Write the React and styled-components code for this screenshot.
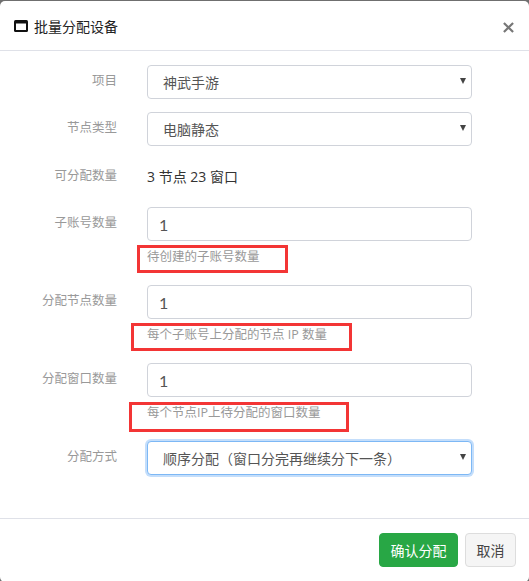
import React from 'react'
import styled, { createGlobalStyle } from 'styled-components'

const FONT = `"Open Sans", "Noto Sans CJK SC", sans-serif`

const GlobalStyle = createGlobalStyle`
    html, body {
        margin: 0;
        padding: 0;
        background: #6f6f6f;
        overflow: hidden;
    }
    * {
        box-sizing: border-box;
    }
`

const Modal = styled.div`
    position: relative;
    width: 529px;
    height: 581px;
    margin-top: 1px;
    background: #fff;
    border-radius: 5px;
    font-family: ${FONT};
    font-size: 14px;
    overflow: hidden;
`

const Header = styled.div`
    display: flex;
    align-items: center;
    justify-content: space-between;
    height: 50px;
    padding: 0 15px 0 14px;
    border-bottom: 1px solid #dfe1e8;
`

const Title = styled.div`
    display: flex;
    align-items: center;
    gap: 6px;
    color: #222;
    font-size: 14px;
`

const CloseIcon = styled.svg`
    width: 11px;
    height: 11px;
    margin-top: 4px;
    stroke: #777;
    stroke-width: 2.4;
`

const Body = styled.form`
    display: flex;
    flex-direction: column;
    height: 467px;
    padding-top: 14px;
`

const Row = styled.div`
    display: grid;
    grid-template-columns: 117px 325px;
    column-gap: 30px;
    margin-bottom: ${(p) => p.$gap}px;
`

const Label = styled.label`
    color: #999;
    font-size: 12.5px;
    line-height: 18px;
    text-align: right;
    padding-top: ${(p) => p.$top || 7}px;
`

const SelectBox = styled.div`
    position: relative;

    &::after {
        content: '';
        position: absolute;
        top: 13px;
        right: 6px;
        border-style: solid;
        border-width: 6px 3px 0;
        border-color: #444 transparent transparent;
        pointer-events: none;
    }
`

const Select = styled.select`
    display: block;
    width: 100%;
    height: 34px;
    padding: 0 15px;
    background: #fff;
    border: 1px solid ${(p) => (p.$focus ? '#7db8f5' : '#d0d3da')};
    border-radius: 4px;
    box-shadow: ${(p) => (p.$focus ? '0 0 0 2px #c4defb' : 'none')};
    color: #555;
    font-family: ${FONT};
    font-size: 14px;
    outline: none;
    appearance: none;
`

const Input = styled.input`
    display: block;
    width: 100%;
    height: 34px;
    padding: 0 11px;
    border: 1px solid #d0d3da;
    border-radius: 4px;
    color: #555;
    font-family: Lato, sans-serif;
    font-size: 16px;
    outline: none;
`

const Static = styled.div`
    color: #333;
    font-size: 14px;
    line-height: 20px;
    padding-top: 8px;
`

const Help = styled.div`
    color: #999;
    font-size: 12.5px;
    line-height: 16px;
    margin-top: 8px;
`

const Mark = styled.span`
    position: absolute;
    left: ${(p) => p.$x}px;
    top: ${(p) => p.$y}px;
    width: ${(p) => p.$w}px;
    height: ${(p) => p.$h}px;
    border: 3px solid #f33535;
`

const Footer = styled.div`
    display: flex;
    justify-content: flex-end;
    gap: 7px;
    padding: 14px 13px 0 0;
    border-top: 1px solid #dfe1e8;
`

const Button = styled.button`
    height: 34px;
    padding: 0 10.5px;
    background: ${(p) => (p.$primary ? '#28a745' : '#f5f5f5')};
    border: 1px solid ${(p) => (p.$primary ? '#28a745' : '#dddddd')};
    border-radius: 4px;
    color: ${(p) => (p.$primary ? '#fff' : '#444')};
    font-family: ${FONT};
    font-size: 14px;
`

function App() {
    return (
        <>
            <GlobalStyle />
            <Modal>
                <Header>
                    <Title>
                        <svg width="14" height="12" viewBox="0 0 14 12">
                            <rect x="0" y="0" width="14" height="12" rx="1.5" fill="#111" />
                            <rect x="2" y="3.5" width="10" height="6.5" fill="#fff" />
                        </svg>
                        批量分配设备
                    </Title>
                    <CloseIcon viewBox="0 0 12 12">
                        <path d="M1 1 L11 11 M11 1 L1 11" />
                    </CloseIcon>
                </Header>
                <Body>
                    <Row $gap={13}>
                        <Label>项目</Label>
                        <SelectBox>
                            <Select defaultValue="a">
                                <option value="a">神武手游</option>
                            </Select>
                        </SelectBox>
                    </Row>
                    <Row $gap={13}>
                        <Label>节点类型</Label>
                        <SelectBox>
                            <Select defaultValue="a">
                                <option value="a">电脑静态</option>
                            </Select>
                        </SelectBox>
                    </Row>
                    <Row $gap={20}>
                        <Label $top={8}>可分配数量</Label>
                        <Static>3 节点 23 窗口</Static>
                    </Row>
                    <Row $gap={20}>
                        <Label>子账号数量</Label>
                        <div>
                            <Input defaultValue="1" />
                            <Help>待创建的子账号数量</Help>
                        </div>
                    </Row>
                    <Row $gap={20}>
                        <Label>分配节点数量</Label>
                        <div>
                            <Input defaultValue="1" />
                            <Help>每个子账号上分配的节点 IP 数量</Help>
                        </div>
                    </Row>
                    <Row $gap={20}>
                        <Label>分配窗口数量</Label>
                        <div>
                            <Input defaultValue="1" />
                            <Help>每个节点IP上待分配的窗口数量</Help>
                        </div>
                    </Row>
                    <Row $gap={0}>
                        <Label>分配方式</Label>
                        <SelectBox>
                            <Select $focus defaultValue="a">
                                <option value="a">顺序分配（窗口分完再继续分下一条）</option>
                            </Select>
                        </SelectBox>
                    </Row>
                </Body>
                <Footer>
                    <Button $primary type="button">确认分配</Button>
                    <Button type="button">取消</Button>
                </Footer>
                <Mark $x={137} $y={244} $w={151} $h={28} />
                <Mark $x={131} $y={322} $w={221} $h={28} />
                <Mark $x={129} $y={401} $w={220} $h={30} />
            </Modal>
        </>
    )
}

export default App
